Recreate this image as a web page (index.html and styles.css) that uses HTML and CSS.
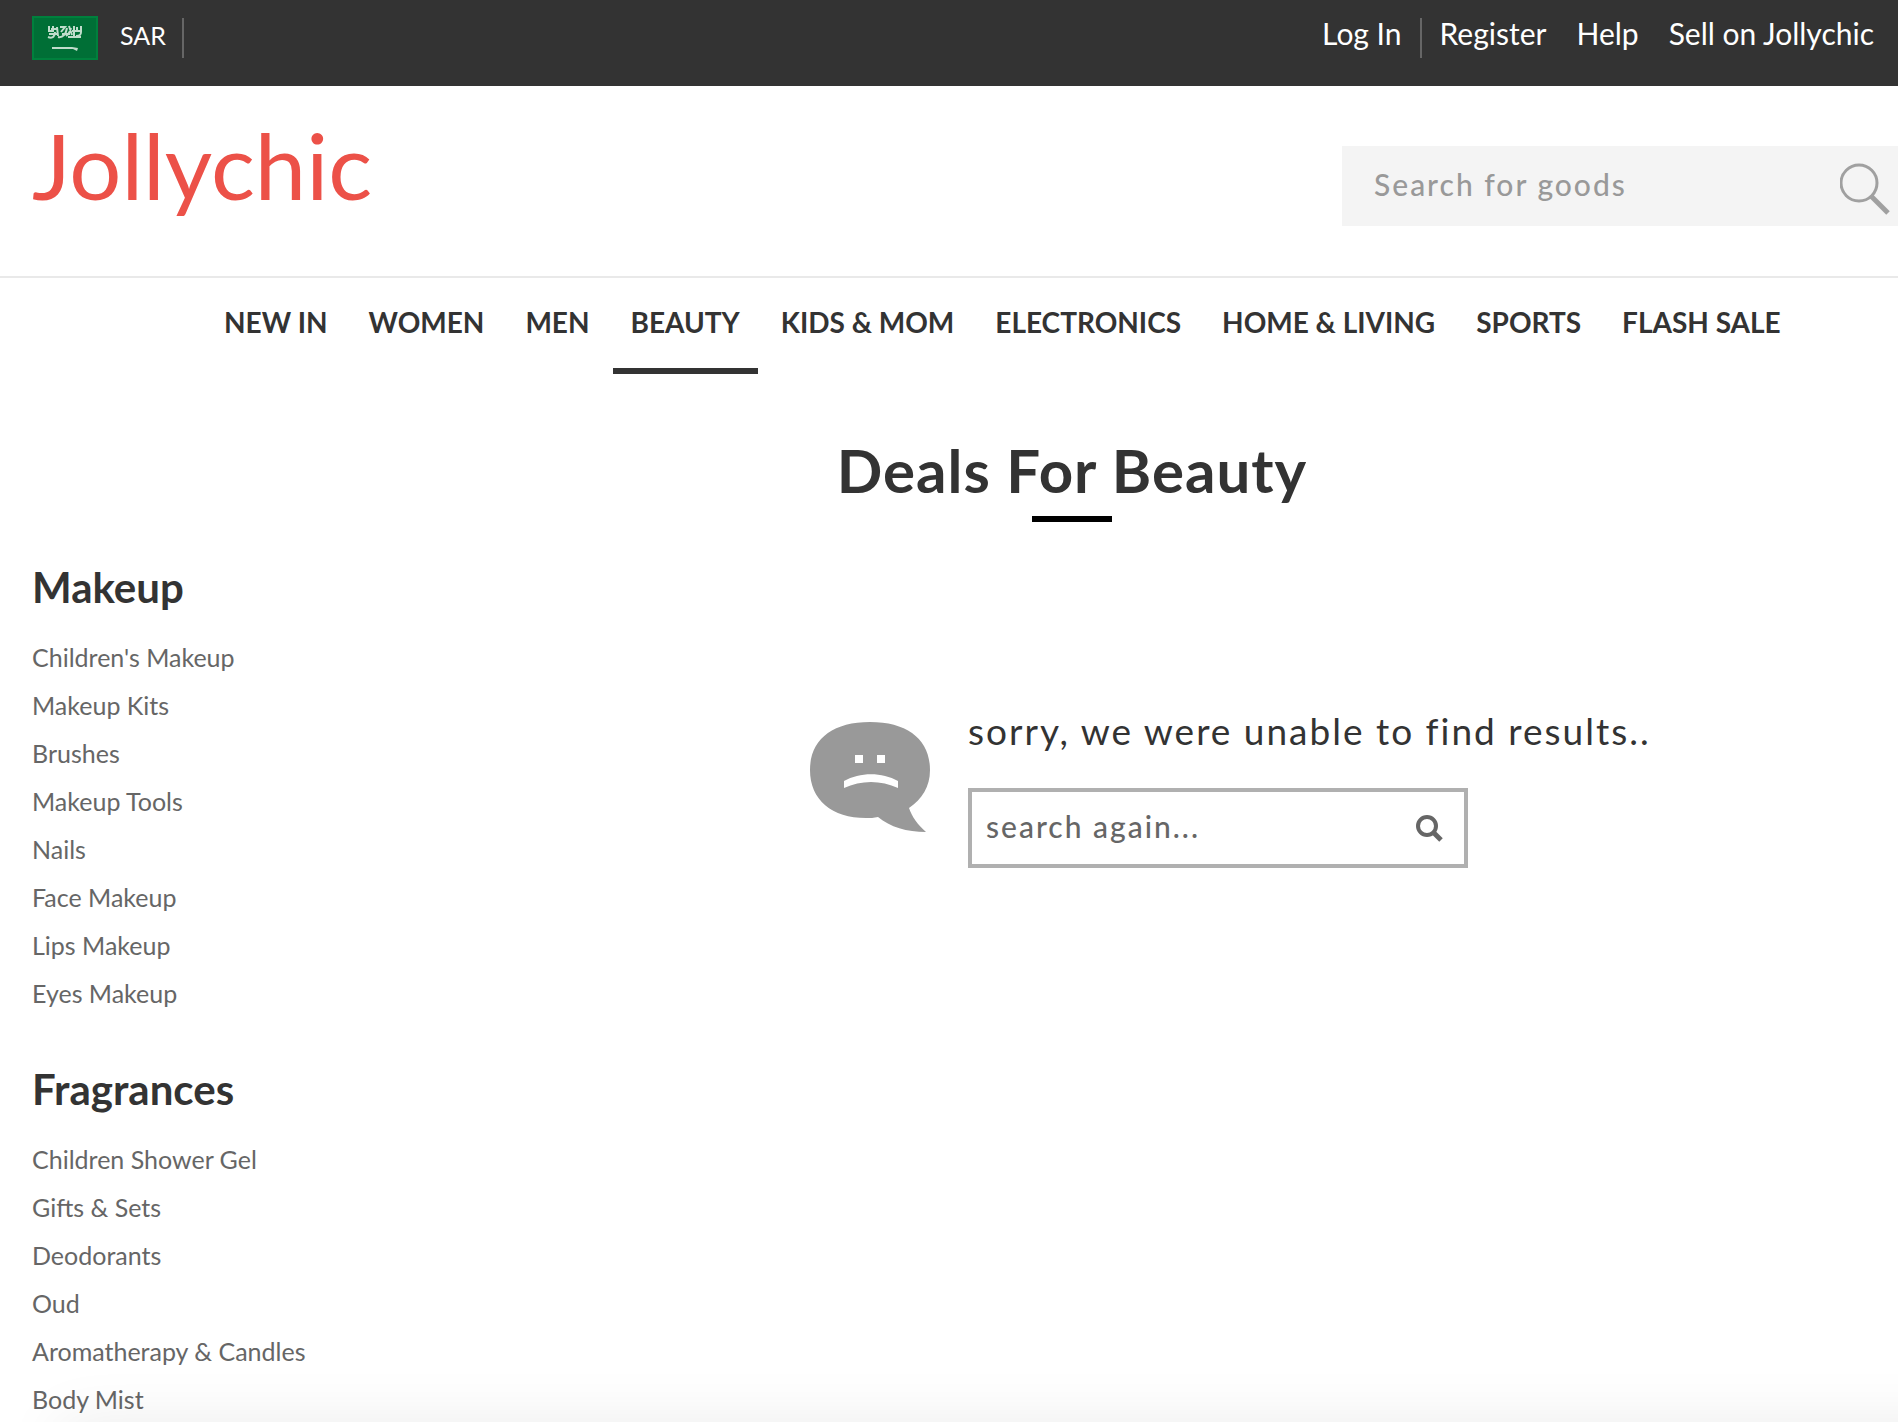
FILE: index.html
```html
<!DOCTYPE html>
<html lang="en">
<head>
    <meta charset="UTF-8">
    <title>Jollychic</title>
    <link rel="stylesheet" href="styles.css">
</head>
<body>
    <div class="top-bar">
        <div class="top-left">
            <svg class="flag" viewBox="0 0 66 44" aria-hidden="true">
                <rect width="66" height="44" fill="#00803d"/>
                <rect x="2" y="2" width="62" height="40" fill="#006f36"/>
                <g fill="none" stroke="#c0dccb" stroke-width="2">
                    <path d="M17 10v5h4v-5M16 21c5 2 7-1 7-5M25 11l1 9M28 11h5l-4 5M26 21c5 1 8-3 9-9M37 10l3 9M34 20c3-2 4-4 5-8M42 10v10M45 11v4h4v-5M44 20c4 0 5-1 5-4M17 18h9M36 21h13M19 13h6M30 18h8M40 15h8"/>
                </g>
                <path d="M20 31h20l6 1-1 3-4-2H20z" fill="#c0dccb"/>
            </svg>
            <a href="#" class="currency">SAR</a>
            <span class="divider"></span>
        </div>
        <div class="top-right">
            <a href="#">Log In</a>
            <span class="divider"></span>
            <a href="#">Register</a>
            <a href="#">Help</a>
            <a href="#">Sell on Jollychic</a>
        </div>
    </div>

    <header class="header">
        <a href="#" class="logo">Jollychic</a>
        <form class="search-form">
            <input type="text" id="search" name="search" placeholder="Search for goods" aria-label="Search for goods">
            <button type="submit" aria-label="Search">
                <svg width="50" height="52" viewBox="0 0 50 52" fill="none" stroke="#a0a0a0">
                    <circle cx="19" cy="20" r="18" stroke-width="3"/>
                    <path d="M31 33l17 17" stroke-width="5"/>
                </svg>
            </button>
        </form>
    </header>

    <nav class="main-nav">
        <a href="#">NEW IN</a>
        <a href="#">WOMEN</a>
        <a href="#">MEN</a>
        <a href="#" class="active">BEAUTY</a>
        <a href="#">KIDS &amp; MOM</a>
        <a href="#">ELECTRONICS</a>
        <a href="#">HOME &amp; LIVING</a>
        <a href="#">SPORTS</a>
        <a href="#">FLASH SALE</a>
    </nav>

    <main>
        <h1>Deals For Beauty</h1>

        <div class="content">
            <aside class="sidebar">
                <h2>Makeup</h2>
                <ul>
                    <li><a href="#">Children's Makeup</a></li>
                    <li><a href="#">Makeup Kits</a></li>
                    <li><a href="#">Brushes</a></li>
                    <li><a href="#">Makeup Tools</a></li>
                    <li><a href="#">Nails</a></li>
                    <li><a href="#">Face Makeup</a></li>
                    <li><a href="#">Lips Makeup</a></li>
                    <li><a href="#">Eyes Makeup</a></li>
                </ul>
                <h2>Fragrances</h2>
                <ul>
                    <li><a href="#">Children Shower Gel</a></li>
                    <li><a href="#">Gifts &amp; Sets</a></li>
                    <li><a href="#">Deodorants</a></li>
                    <li><a href="#">Oud</a></li>
                    <li><a href="#">Aromatherapy &amp; Candles</a></li>
                    <li><a href="#">Body Mist</a></li>
                </ul>
            </aside>

            <section class="no-results">
                <svg class="sad-icon" viewBox="0 0 120 110" aria-hidden="true">
                    <path d="M60 0C22 0 0 18 0 48s22 48 56 48c4 0 8 0 12-1 12 10 29 15 48 15-8-7-14-15-17-24 13-9 21-21 21-38C120 18 98 0 60 0z" fill="#999"/>
                    <rect x="45" y="33" width="8" height="8" fill="#fff"/>
                    <rect x="67" y="33" width="8" height="8" fill="#fff"/>
                    <path d="M34 59c16-9 38-9 54 0v7c-17-8-37-8-54 0z" fill="#fff"/>
                </svg>
                <div>
                    <p>sorry, we were unable to find results..</p>
                    <form class="again-form">
                        <input type="text" id="again" name="again" placeholder="search again..." aria-label="search again">
                        <button type="submit" aria-label="Search again">
                            <svg width="28" height="28" viewBox="0 0 28 28" fill="none" stroke="#666">
                                <circle cx="11" cy="12" r="9" stroke-width="4"/>
                                <path d="M17 18l8 8" stroke-width="5"/>
                            </svg>
                        </button>
                    </form>
                </div>
            </section>
        </div>
    </main>

    <div class="bottom-shade"></div>
</body>
</html>
```
FILE: styles.css
```css
body {
    margin: 0;
    font-family: Lato, sans-serif;
    color: #333;
    background-color: #fff;
}

a {
    color: inherit;
    text-decoration: none;
}

input,
button {
    font-family: inherit;
    border: none;
    background: none;
    padding: 0;
    outline: none;
}

button {
    display: flex;
    cursor: pointer;
}

.top-bar {
    display: flex;
    justify-content: space-between;
    height: 86px;
    padding: 0 24px 0 32px;
    background-color: #333;
    color: #fff;
    font-size: 30px;
    line-height: 66px;
}

.top-left,
.top-right {
    display: flex;
}

.top-right {
    gap: 30px;
}

.flag {
    width: 66px;
    height: 44px;
    margin: 16px 22px 0 0;
}

.currency {
    font-size: 25px;
    line-height: 70px;
    margin-right: 16px;
}

.divider {
    width: 2px;
    height: 40px;
    margin-top: 18px;
    background-color: #666;
}

.top-right .divider {
    margin-left: -12px;
    margin-right: -12px;
}

.header {
    display: flex;
    justify-content: space-between;
    align-items: center;
    height: 190px;
    padding-left: 32px;
    border-bottom: 2px solid #e9e9e9;
}

.logo {
    margin-bottom: 32px;
    color: #ec5148;
    font-size: 92px;
    line-height: 104px;
}

.search-form {
    display: flex;
    align-items: center;
    justify-content: space-between;
    box-sizing: border-box;
    width: 556px;
    height: 80px;
    margin-top: 10px;
    padding: 0 8px 0 32px;
    background-color: #f4f4f4;
}

.search-form input,
.again-form input {
    flex: 1;
    min-width: 0;
    padding-bottom: 4px;
    font-size: 30px;
    font-weight: 500;
    letter-spacing: 2px;
    color: #333;
}

.search-form button {
    margin-top: 6px;
}

.search-form input::placeholder {
    color: #999;
}

.main-nav {
    display: flex;
    gap: 5px;
    padding-left: 206px;
    font-size: 28px;
    font-weight: bold;
    line-height: 88px;
}

.main-nav a {
    padding: 0 18px 2px;
    border-bottom: 6px solid transparent;
    white-space: nowrap;
}

.main-nav a.active {
    border-color: #333;
}

h1 {
    margin: 60px 0 40px;
    padding-left: 246px;
    font-size: 60px;
    line-height: 72px;
    letter-spacing: 1px;
    text-align: center;
}

h1::after {
    content: "";
    display: block;
    width: 80px;
    height: 6px;
    margin: 10px auto 0;
    background-color: #000;
}

.content {
    display: flex;
}

.sidebar {
    width: 530px;
    padding-left: 32px;
}

.sidebar h2 {
    margin: 0 0 29px;
    font-size: 42px;
    line-height: 50px;
}

.sidebar ul {
    display: flex;
    flex-direction: column;
    gap: 16px;
    list-style: none;
    margin: 0;
    padding: 0;
    color: #666;
    font-size: 25px;
    line-height: 32px;
}

.sidebar ul + h2 {
    margin-top: 55px;
}

.no-results {
    display: flex;
    align-items: flex-start;
    gap: 38px;
    padding: 144px 0 0 248px;
}

.sad-icon {
    width: 120px;
    height: 110px;
    margin-top: 16px;
}

.no-results p {
    margin: 0 0 32px;
    font-size: 37px;
    line-height: 50px;
    letter-spacing: 2px;
}

.again-form {
    display: flex;
    align-items: center;
    box-sizing: border-box;
    width: 500px;
    height: 80px;
    padding: 0 20px 0 14px;
    border: 4px solid #b0b0b0;
}

.again-form input::placeholder {
    color: #666;
}

/* soft shadow along the bottom of the window */
.bottom-shade {
    position: fixed;
    top: 100%;
    left: 60px;
    right: -100px;
    height: 100px;
    box-shadow: 0 0 60px rgba(0, 0, 0, 0.08);
}
```
